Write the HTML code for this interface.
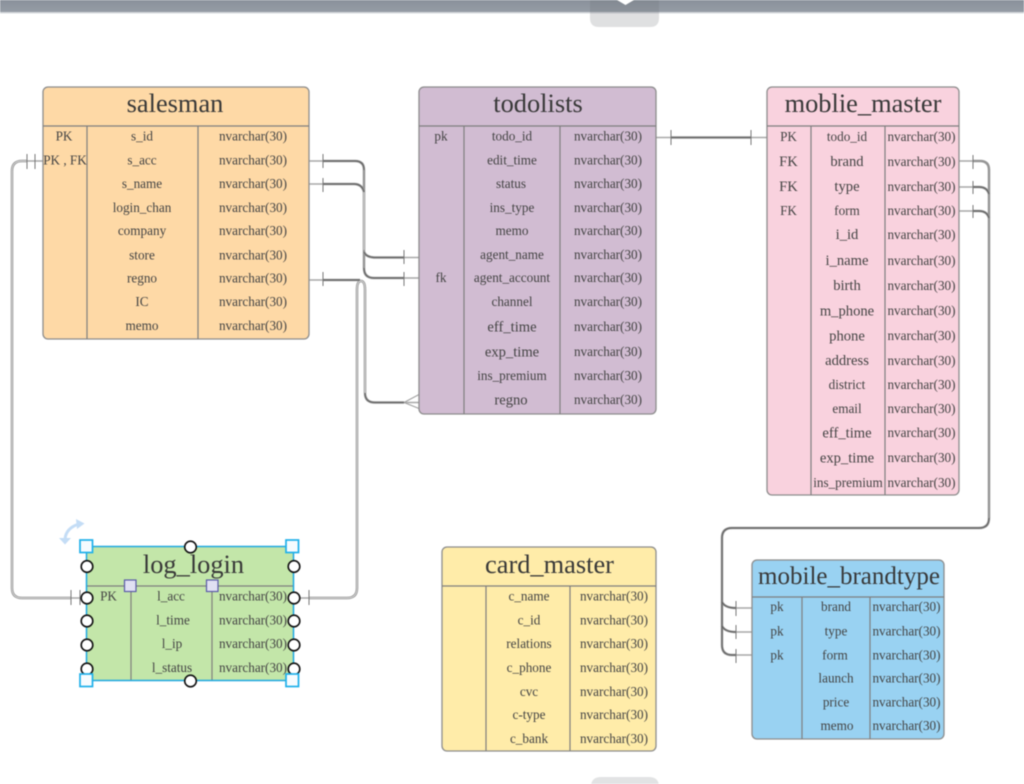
<!DOCTYPE html>
<html lang="en">
<head>
<meta charset="utf-8">
<title>ER diagram</title>
<style>
html,body{margin:0;padding:0;background:#fff;width:1024px;height:784px;overflow:hidden}
svg{display:block;filter:blur(.4px)}
text{font-family:"Liberation Serif",serif;fill:#444;font-size:13.2px;text-anchor:middle}
.t{font-size:26.4px;fill:#383838}
.b{font-size:14.6px}
.box{stroke:#8d8d8d;stroke-width:1.3}
.ln{stroke:#7f7f7f;stroke-width:1.2;fill:none}
.c1{fill:none;stroke:#969696;stroke-width:2.5}
.c2{fill:none;stroke:#e8e8e8;stroke-width:.7}
.c3{fill:none;stroke:#5e5e5e;stroke-width:.9}
.st{fill:none;stroke:#a8a8a8;stroke-width:1.5}
.tk{stroke:#777;stroke-width:1;fill:none}
</style>
</head>
<body>
<svg width="1024" height="784" viewBox="0 0 1024 784" xmlns="http://www.w3.org/2000/svg">
<defs>
<linearGradient id="bar" x1="0" y1="0" x2="0" y2="1"><stop offset="0" stop-color="#8a919b"/><stop offset="1" stop-color="#959ca5"/></linearGradient>
</defs>
<rect width="1024" height="784" fill="#fff"/>
<rect x="0" y="0" width="1024" height="12" fill="url(#bar)"/>
<rect x="0" y="12" width="1024" height="1.5" fill="#d5d8dc"/>
<path d="M590 0H659V18Q659 27 650 27H599Q590 27 590 18Z" fill="#6c7078" fill-opacity=".22"/>
<path d="M617 0H634L625.500 5Z" fill="#fff"/>
<path d="M591 784V787Q591 777 601 777H649Q659 777 659 787V784Z" fill="#e2e3e4"/>

<!-- connectors -->
<g>
<path class="st" d="M309 161H323M309 184H323M309 280H323M404 257.500H419M404 278H419M404 402.500H419M294 598H309M71 598H86M27 161H43M656 137.500H671M751 137.500H767M959 161H973M959 187H973M959 211H973M736 608H752M736 632H752M736 655H752"/>
<path class="c1" d="M323 161H355Q364 161 364 170V268Q364 278 374 278H404"/>
<path class="c1" d="M323 184H354Q362 184 364 192"/>
<path class="c1" d="M364 252Q366 257 374 257.500H404"/>
<path class="c1" d="M323 280H360"/>
<path class="c1" d="M309 598H347Q357 598 357 588V290Q357 281 361 281Q365 281 365 290V393Q365 402.500 375 402.500H404"/>
<path class="c1" d="M27 161H22Q12 161 12 171V588Q12 598 22 598H71"/>
<path class="c1" d="M671 137.500H751"/>
<path class="c1" d="M973 161H980Q989 161 989 170V518Q989 528 979 528H732Q722 528 722 538V645Q722 655 732 655H736"/>
<path class="c1" d="M973 187H979Q987 187 989 194"/>
<path class="c1" d="M973 211H979Q987 211 989 218"/>
<path class="c1" d="M722 602Q725 608 736 608"/>
<path class="c1" d="M722 626Q725 632 736 632"/>
<path class="c2" d="M309 598H347Q357 598 357 588V290Q357 281 361 281Q365 281 365 290V393"/>
<path class="c2" d="M27 161H22Q12 161 12 171V588Q12 598 22 598H71"/>
<path class="c2" d="M364 192V250"/>
<path class="c3" d="M323 161H355Q364 161 364 170"/>
<path class="c3" d="M323 184H354Q362 184 364 192"/>
<path class="c3" d="M364 252Q366 257 374 257.500H404"/>
<path class="c3" d="M364 268Q364 278 374 278H404"/>
<path class="c3" d="M323 280H360"/>
<path class="c3" d="M365 393Q365 402.500 375 402.500H404"/>
<path class="c3" d="M671 137.500H751"/>
<path class="c3" d="M973 187H979Q987 187 989 194"/>
<path class="c3" d="M973 211H979Q987 211 989 218"/>
<path class="c3" d="M989 518Q989 528 979 528H732Q722 528 722 538V645Q722 655 732 655H736"/>
<path class="c3" d="M722 602Q725 608 736 608"/>
<path class="c3" d="M722 626Q725 632 736 632"/>
<path class="tk" d="M27 154V169M35 154V169M323 154V168M323 178V192M404 250V264M404 272V286M323 272V286M71 590V605M80 590V605M309 590V605M671 130V145M751 130V145M973 155V169M973 181V194M973 205V218M736 601V616M736 625V639M736 649V663"/>
<path d="M404 402.500L419 394.500M404 402.500L419 408.500" fill="none" stroke="#a0a0a0" stroke-width="1"/>
</g>

<!-- salesman -->
<rect class="box" x="43" y="87" width="266" height="252" rx="5" fill="#fed9a6"/>
<path class="ln" d="M43 126H309M87 126V339M198 126V339"/>
<text class="t" x="175" y="112">salesman</text>
<text x="64" y="140.500">PK</text><text x="65" y="164.500">PK , FK</text>
<text x="142" y="140.500">s_id</text><text x="142" y="164.500">s_acc</text><text x="142" y="188">s_name</text><text x="142" y="212">login_chan</text><text x="142" y="235">company</text><text x="142" y="259.500">store</text><text x="142" y="282.500">regno</text><text x="142" y="306">IC</text><text x="142" y="330">memo</text>
<text x="253" y="140.500">nvarchar(30)</text><text x="253" y="164.500">nvarchar(30)</text><text x="253" y="188">nvarchar(30)</text><text x="253" y="212">nvarchar(30)</text><text x="253" y="235">nvarchar(30)</text><text x="253" y="259.500">nvarchar(30)</text><text x="253" y="282.500">nvarchar(30)</text><text x="253" y="306">nvarchar(30)</text><text x="253" y="330">nvarchar(30)</text>

<!-- todolists -->
<rect class="box" x="419" y="87" width="237" height="327" rx="5" fill="#d1bcd2"/>
<path class="ln" d="M419 126H656M464 126V414M560 126V414"/>
<text class="t" x="538" y="112">todolists</text>
<text x="441" y="140.500">pk</text><text x="441" y="282">fk</text>
<text x="512" y="140.500">todo_id</text><text x="512" y="164.500">edit_time</text><text x="511" y="188">status</text><text x="512" y="212">ins_type</text><text x="512" y="235">memo</text><text x="512" y="259">agent_name</text><text x="512" y="282">agent_account</text><text x="512" y="306">channel</text><text class="b" x="512" y="331.500">eff_time</text><text class="b" x="512" y="356.500">exp_time</text><text x="512" y="380">ins_premium</text><text class="b" x="511" y="404.500">regno</text>
<text x="608" y="140.500">nvarchar(30)</text><text x="608" y="164.500">nvarchar(30)</text><text x="608" y="188">nvarchar(30)</text><text x="608" y="212">nvarchar(30)</text><text x="608" y="235">nvarchar(30)</text><text x="608" y="259">nvarchar(30)</text><text x="608" y="282">nvarchar(30)</text><text x="608" y="306">nvarchar(30)</text><text x="608" y="331">nvarchar(30)</text><text x="608" y="356">nvarchar(30)</text><text x="608" y="380">nvarchar(30)</text><text x="608" y="404">nvarchar(30)</text>

<!-- moblie_master -->
<rect class="box" x="767" y="87" width="192" height="408" rx="5" fill="#f9d2de"/>
<path class="ln" d="M767 126H959M811 126V495M885 126V495"/>
<text class="t" x="863" y="112">moblie_master</text>
<text x="788.500" y="141">PK</text><text class="b" x="788.500" y="166">FK</text><text class="b" x="788.500" y="191">FK</text><text x="788.500" y="215">FK</text>
<text x="847" y="141">todo_id</text><text class="b" x="847" y="166">brand</text><text class="b" x="847" y="191">type</text><text x="847" y="215">form</text><text class="b" x="847" y="239">i_id</text><text class="b" x="847" y="265">i_name</text><text class="b" x="847" y="290">birth</text><text class="b" x="847" y="315.500">m_phone</text><text class="b" x="847" y="340.500">phone</text><text class="b" x="847" y="365">address</text><text x="847" y="389">district</text><text x="847" y="413">email</text><text class="b" x="847" y="437.500">eff_time</text><text class="b" x="847" y="462.500">exp_time</text><text x="848" y="487">ins_premium</text>
<text x="921.500" y="141">nvarchar(30)</text><text x="921.500" y="166">nvarchar(30)</text><text x="921.500" y="191">nvarchar(30)</text><text x="921.500" y="215">nvarchar(30)</text><text x="921.500" y="239">nvarchar(30)</text><text x="921.500" y="265">nvarchar(30)</text><text x="921.500" y="290">nvarchar(30)</text><text x="921.500" y="315">nvarchar(30)</text><text x="921.500" y="340">nvarchar(30)</text><text x="921.500" y="365">nvarchar(30)</text><text x="921.500" y="389">nvarchar(30)</text><text x="921.500" y="413">nvarchar(30)</text><text x="921.500" y="437">nvarchar(30)</text><text x="921.500" y="462">nvarchar(30)</text><text x="921.500" y="487">nvarchar(30)</text>

<!-- card_master -->
<rect class="box" x="442" y="547" width="214" height="204" rx="5" fill="#ffeca9"/>
<path class="ln" d="M442 586H656M486 586V751M570 586V751"/>
<text class="t" x="549.500" y="573">card_master</text>
<text x="529" y="600.500">c_name</text><text x="529" y="624.500">c_id</text><text x="529" y="648">relations</text><text x="529" y="672">c_phone</text><text x="529" y="696">cvc</text><text x="529" y="719">c-type</text><text x="529" y="743">c_bank</text>
<text x="614" y="600.500">nvarchar(30)</text><text x="614" y="624.500">nvarchar(30)</text><text x="614" y="648">nvarchar(30)</text><text x="614" y="672">nvarchar(30)</text><text x="614" y="696">nvarchar(30)</text><text x="614" y="719">nvarchar(30)</text><text x="614" y="743">nvarchar(30)</text>

<!-- mobile_brandtype -->
<rect class="box" x="752" y="560" width="192" height="179" rx="5" fill="#99d2f2"/>
<path class="ln" d="M752 597H944M802 597V739M870 597V739"/>
<text class="t" x="849" y="584" style="font-size:25px">mobile_brandtype</text>
<text x="777" y="611">pk</text><text x="777" y="635.500">pk</text><text x="777" y="659.500">pk</text>
<text x="836" y="611">brand</text><text x="836" y="635.500">type</text><text x="835" y="659.500">form</text><text x="836" y="682.500">launch</text><text x="836" y="706.500">price</text><text x="837" y="730">memo</text>
<text x="906.500" y="611">nvarchar(30)</text><text x="906.500" y="635.500">nvarchar(30)</text><text x="906.500" y="659.500">nvarchar(30)</text><text x="906.500" y="682.500">nvarchar(30)</text><text x="906.500" y="706.500">nvarchar(30)</text><text x="906.500" y="730">nvarchar(30)</text>

<!-- log_login -->
<rect x="86.500" y="546.500" width="207" height="134" fill="#c3e6a9"/>
<path class="ln" d="M86 586H294M131 586V680M212 586V680"/>
<text class="t" x="193.500" y="573">log_login</text>
<text x="108.500" y="600.500">PK</text>
<text x="171" y="600.500">l_acc</text><text x="173" y="624.500">l_time</text><text x="172" y="648">l_ip</text><text x="172" y="672">l_status</text>
<text x="253" y="600.500">nvarchar(30)</text><text x="253" y="624.500">nvarchar(30)</text><text x="253" y="648">nvarchar(30)</text><text x="253" y="672">nvarchar(30)</text>

<!-- selection -->
<rect x="86.500" y="546.500" width="207" height="134" fill="none" stroke="#1fa9e1" stroke-width="1.5"/>
<g fill="#fff" stroke="#111" stroke-width="1.6">
<circle cx="190.500" cy="547" r="5.800"/><circle cx="190.500" cy="681" r="5.800"/>
<circle cx="87" cy="566.500" r="5.800"/><circle cx="294" cy="566.500" r="5.800"/>
<circle cx="87" cy="598" r="5.800"/><circle cx="294" cy="598" r="5.800"/>
<circle cx="87" cy="621" r="5.800"/><circle cx="294" cy="621" r="5.800"/>
<circle cx="87" cy="645" r="5.800"/><circle cx="294" cy="645" r="5.800"/>
<circle cx="87" cy="669" r="5.800"/><circle cx="294" cy="669" r="5.800"/>
</g>
<g fill="#f6fbfe" stroke="#1fb0ea" stroke-width="1.7">
<rect x="80" y="540" width="12.500" height="12.500"/><rect x="286" y="540" width="12.500" height="12.500"/>
<rect x="80" y="674" width="12.500" height="12.500"/><rect x="286" y="674" width="12.500" height="12.500"/>
</g>
<g fill="#e0e0f2" stroke="#5a5aa8" stroke-width="1.2">
<rect x="124.500" y="580" width="11.500" height="11.500"/><rect x="206.500" y="580" width="11.500" height="11.500"/>
</g>
<path d="M65 539Q66 528 79 524" fill="none" stroke="#c4ddf6" stroke-width="3"/>
<path d="M76 519L84.500 523.500L77 529Z M59 538L71 538L65 544.500Z" fill="#c4ddf6"/>
</svg>
</body>
</html>
